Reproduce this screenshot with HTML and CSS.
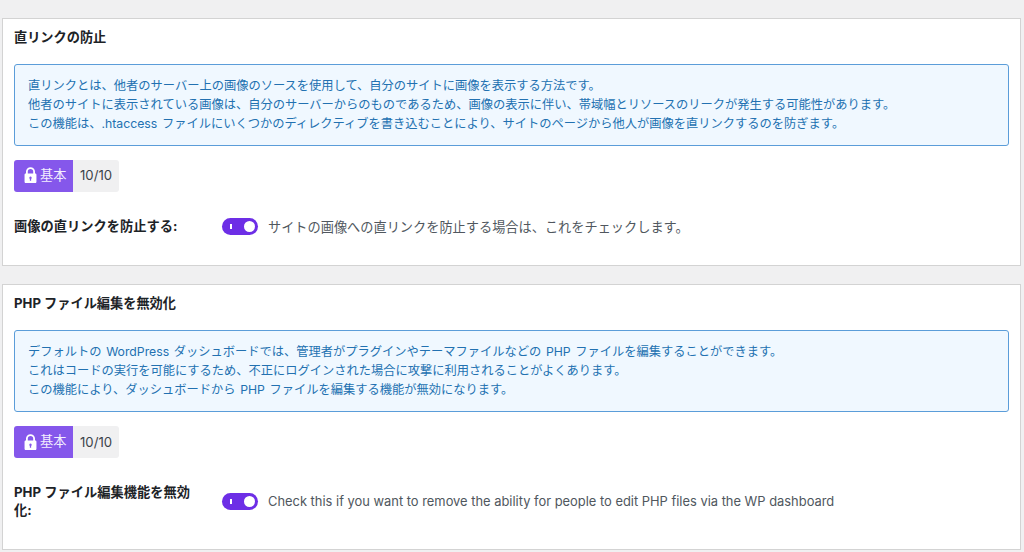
FILE: index.html
```html
<!DOCTYPE html>
<html lang="ja">
<head>
<meta charset="utf-8">
<title>直リンクの防止</title>
<link rel="stylesheet" href="styles.css">
</head>
<body>
<section class="card card-first">
  <h3 class="card-title">直リンクの防止</h3>
  <div class="info">
    <p>直リンクとは、他者のサーバー上の画像のソースを使用して、自分のサイトに画像を表示する方法です。</p>
    <p>他者のサイトに表示されている画像は、自分のサーバーからのものであるため、画像の表示に伴い、帯域幅とリソースのリークが発生する可能性があります。</p>
    <p>この機能は、.htaccess ファイルにいくつかのディレクティブを書き込むことにより、サイトのページから他人が画像を直リンクするのを防ぎます。</p>
  </div>
  <div class="badge">
    <span class="badge-level">
      <svg class="lock" viewBox="0 0 12 16"><path d="M2.6 6.500V4.400a3.400 3.400 0 0 1 6.800 0v2.100" fill="none" stroke="#fff" stroke-width="1.700"/><path fill="#fff" fill-rule="evenodd" d="M1.600 6h8.800c.7 0 1.200.5 1.200 1.200v6.600c0 .7-.5 1.200-1.200 1.200H1.600C.9 15 .4 14.500.4 13.800V7.200C.4 6.500.9 6 1.600 6zM6 9a1.200 1.200 0 0 0-.6 2.200V13h1.200v-1.800A1.200 1.200 0 0 0 6 9z"/></svg>
      <span class="badge-text">基本</span></span>
    <span class="badge-score">10/10</span>
  </div>
  <div class="row">
    <div class="row-label">画像の直リンクを防止する:</div>
    <span class="toggle"><i class="toggle-mark"></i><i class="toggle-knob"></i></span>
    <div class="row-desc">サイトの画像への直リンクを防止する場合は、これをチェックします。</div>
  </div>
</section>
<section class="card card-second">
  <h3 class="card-title">PHP ファイル編集を無効化</h3>
  <div class="info">
    <p>デフォルトの WordPress ダッシュボードでは、管理者がプラグインやテーマファイルなどの PHP ファイルを編集することができます。</p>
    <p>これはコードの実行を可能にするため、不正にログインされた場合に攻撃に利用されることがよくあります。</p>
    <p>この機能により、ダッシュボードから PHP ファイルを編集する機能が無効になります。</p>
  </div>
  <div class="badge">
    <span class="badge-level">
      <svg class="lock" viewBox="0 0 12 16"><path d="M2.6 6.500V4.400a3.400 3.400 0 0 1 6.800 0v2.100" fill="none" stroke="#fff" stroke-width="1.700"/><path fill="#fff" fill-rule="evenodd" d="M1.600 6h8.800c.7 0 1.200.5 1.200 1.200v6.600c0 .7-.5 1.200-1.200 1.200H1.600C.9 15 .4 14.500.4 13.800V7.200C.4 6.500.9 6 1.600 6zM6 9a1.200 1.200 0 0 0-.6 2.200V13h1.200v-1.800A1.200 1.200 0 0 0 6 9z"/></svg>
      <span class="badge-text">基本</span></span>
    <span class="badge-score">10/10</span>
  </div>
  <div class="row">
    <div class="row-label">PHP ファイル編集機能を無効化:</div>
    <span class="toggle"><i class="toggle-mark"></i><i class="toggle-knob"></i></span>
    <div class="row-desc row-desc-latin">Check this if you want to remove the ability for people to edit PHP files via the WP dashboard</div>
  </div>
</section>
</body>
</html>
```
FILE: styles.css
```css
* { box-sizing: border-box; }
html, body { margin: 0; height: 552px; overflow: hidden; }
body {
  background: #f0f0f1;
  padding: 18px 2px 0 2px;
  font-family: Inter, "Noto Sans CJK JP", "Liberation Sans", sans-serif;
  color: #3c434a;
}
.card {
  background: #fff;
  border: 1px solid #d3d3d3;
  padding: 0 11px;
  width: 1019px;
}
.card-first { height: 248px; margin-bottom: 18px; }
.card-second { height: 266px; }
.card-first .info { height: 81.5px; }
.card-title {
  margin: 0;
  height: 45px;
  padding-top: 10px;
  font-size: 13.2px;
  line-height: 16px;
  font-weight: 700;
  color: #1d2327;
}
.info {
  width: 995px;
  height: 82px;
  background: #f0f8ff;
  border: 1px solid #5b9dd9;
  border-radius: 3px;
  padding: 11px 13px;
  color: #2271b1;
  font-size: 12.26px;
  line-height: 19px;
  word-spacing: 1.2px;
}
.info p { margin: 0; white-space: nowrap; }
.badge {
  display: flex;
  width: 105px;
  height: 32px;
  margin-top: 14px;
  border-radius: 3px;
  overflow: hidden;
  font-size: 13.2px;
}
.badge-level {
  display: flex;
  align-items: center;
  gap: 3px;
  width: 59px;
  padding-left: 10px;
  background: #8557eb;
  color: #f3eefe;
}
.badge-text { padding-bottom: 3px; }
.lock { width: 13px; height: 17px; flex: none; }
.badge-score {
  flex: 1;
  display: flex;
  align-items: center;
  padding: 0 0 1px 7px;
  background: #f0f0f1;
  color: #3c434a;
}
.row {
  display: flex;
  align-items: center;
  margin-top: 26px;
}
.row-label {
  width: 208px;
  padding-right: 20px;
  font-size: 13.25px;
  line-height: 17.500px;
  font-weight: 700;
  color: #1d2327;
}
.toggle {
  position: relative;
  flex: none;
  width: 36px;
  height: 17px;
  border-radius: 9px;
  background: #6d2ee6;
}
.toggle-mark {
  position: absolute;
  left: 8px;
  top: 6px;
  width: 2px;
  height: 5px;
  background: #fff;
}
.toggle-knob {
  position: absolute;
  right: 3px;
  top: 3px;
  width: 11px;
  height: 11px;
  border-radius: 50%;
  background: #fff;
}
.row-desc {
  margin-left: 10px;
  font-size: 13.2px;
  line-height: 18px;
  color: #50575e;
  white-space: nowrap;
}
.row-desc-latin { font-size: 12.9px; }
```
